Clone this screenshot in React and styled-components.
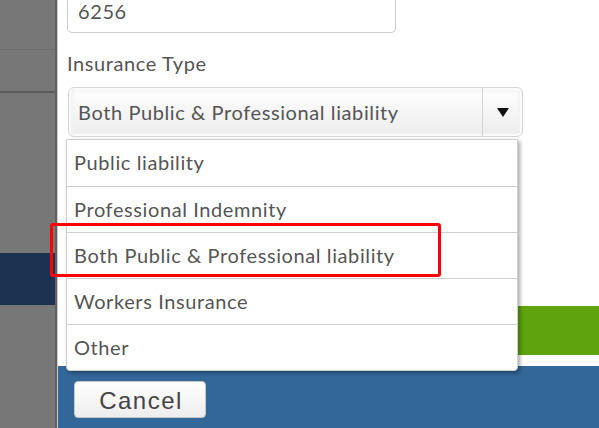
import React from "react";
import styled, { createGlobalStyle } from "styled-components";

const GlobalStyle = createGlobalStyle`
  html, body {
    margin: 0;
    padding: 0;
    height: 100%;
    overflow: hidden;
    background: #fff;
  }
  #root {
    height: 100%;
  }
`;

const Page = styled.div`
  display: flex;
  height: 428px;
  width: 599px;
  font-family: Lato, "Liberation Sans", sans-serif;
`;

const Sidebar = styled.div`
  width: 55px;
  flex-shrink: 0;
  display: flex;
  flex-direction: column;
  background: #777;
  border-right: 2px solid #616161;
  box-shadow: 1px 0 0 #c9c9c9;
`;

const SideRow = styled.div`
  height: ${(p) => p.h}px;
  flex-shrink: 0;
  border-bottom: ${(p) => p.line}px solid ${(p) => p.lineColor || "#666"};
  background: ${(p) => p.bg || "transparent"};
`;

const Main = styled.div`
  flex: 1;
  display: flex;
  flex-direction: column;
  margin-left: 1px;
  min-width: 0;
`;

const Form = styled.div`
  display: flex;
  flex-direction: column;
  flex-shrink: 0;
  padding-left: 9px;
  height: 306px;
`;

/* input is scrolled partly out of view: only its lower part shows */
const TextInput = styled.div`
  box-sizing: border-box;
  width: 329px;
  height: 33px;
  border: 1px solid #ccc;
  border-top: none;
  border-radius: 0 0 5px 5px;
  padding: 1px 0 0 10px;
  font-size: 20px;
  line-height: 20px;
  letter-spacing: 0.6px;
  color: #555;
`;

const Label = styled.div`
  margin-top: 18px;
  font-size: 20px;
  letter-spacing: 0.6px;
  line-height: 24px;
  color: #555;
`;

const SelectWrap = styled.div`
  position: relative;
  margin-top: 12px;
  margin-left: 1px;
  width: 455px;
`;

const SelectBox = styled.div`
  box-sizing: border-box;
  height: 50px;
  display: flex;
  border: 1px solid #d6d6d6;
  border-radius: 6px;
  background: linear-gradient(#ffffff, #ececec);
  box-shadow: inset 0 0 0 2px #fafafa, inset 0 0 4px 3px #f0f0f0;
`;

const SelectValue = styled.div`
  flex: 1;
  display: flex;
  align-items: center;
  padding-left: 9px;
  font-size: 20px;
  letter-spacing: 0.6px;
  color: #555;
`;

const ArrowCell = styled.div`
  width: 39px;
  display: flex;
  align-items: center;
  justify-content: center;
  border-left: 1px solid #d2d2d2;
`;

const Arrow = styled.span`
  width: 0;
  height: 0;
  border-left: 6px solid transparent;
  border-right: 6px solid transparent;
  border-top: 9px solid #111;
`;

const Options = styled.ul`
  position: absolute;
  top: 52px;
  left: -2px;
  width: 452px;
  box-sizing: border-box;
  margin: 0;
  padding: 0;
  list-style: none;
  background: #fff;
  border: 1px solid #cfcfcf;
  border-radius: 0 0 4px 4px;
  box-shadow: 2px 2px 4px rgba(0, 0, 0, 0.35);
  z-index: 5;
`;

const Option = styled.li`
  position: relative;
  box-sizing: border-box;
  height: 46px;
  display: flex;
  align-items: center;
  padding: 0 0 2px 7px;
  font-size: 20px;
  letter-spacing: 0.6px;
  color: #555;
  border-top: ${(p) => (p.first ? "none" : "1px solid #cfcfcf")};
`;

const Highlight = styled.div`
  position: absolute;
  left: -17px;
  top: -10px;
  width: 391px;
  height: 54px;
  box-sizing: border-box;
  border: 3px solid #f00;
  border-radius: 3px;
  pointer-events: none;
`;

const GreenBar = styled.div`
  height: 49px;
  margin-left: 9px;
  background: #5ea40e;
  flex-shrink: 0;
`;

const Footer = styled.div`
  margin-top: 11px;
  flex: 1;
  min-height: 0;
  overflow: hidden;
  background: #346799;
  padding: 15px 16px 0;
`;

const CancelButton = styled.button`
  width: 132px;
  height: 37px;
  border: 1px solid #c8c8c8;
  border-radius: 4px;
  background: linear-gradient(#ffffff, #ededed);
  font-family: "Liberation Sans", Arial, sans-serif;
  font-size: 24px;
  letter-spacing: 1.5px;
  color: #444;
  padding: 2px 0 0 2px;
  display: flex;
  align-items: center;
  justify-content: center;
`;

const options = [
  "Public liability",
  "Professional Indemnity",
  "Both Public & Professional liability",
  "Workers Insurance",
  "Other",
];

const App = () => {
  return (
    <>
      <GlobalStyle />
      <Page>
        <Sidebar>
          <SideRow h={49} line={1} lineColor="#6c6c6c" />
          <SideRow h={41} line={2} lineColor="#5c5c5c" />
          <SideRow h={160} line={0} />
          <SideRow h={52} line={0} bg="#1b3350" />
        </Sidebar>
        <Main>
          <Form>
            <TextInput>6256</TextInput>
            <Label>Insurance Type</Label>
            <SelectWrap>
              <SelectBox>
                <SelectValue>Both Public &amp; Professional liability</SelectValue>
                <ArrowCell>
                  <Arrow />
                </ArrowCell>
              </SelectBox>
              <Options>
                {options.map((o, i) => (
                  <Option key={o} first={i === 0}>
                    {o}
                    {i === 2 && <Highlight />}
                  </Option>
                ))}
              </Options>
            </SelectWrap>
          </Form>
          <GreenBar />
          <Footer>
            <CancelButton>Cancel</CancelButton>
          </Footer>
        </Main>
      </Page>
    </>
  );
};

export default App;
